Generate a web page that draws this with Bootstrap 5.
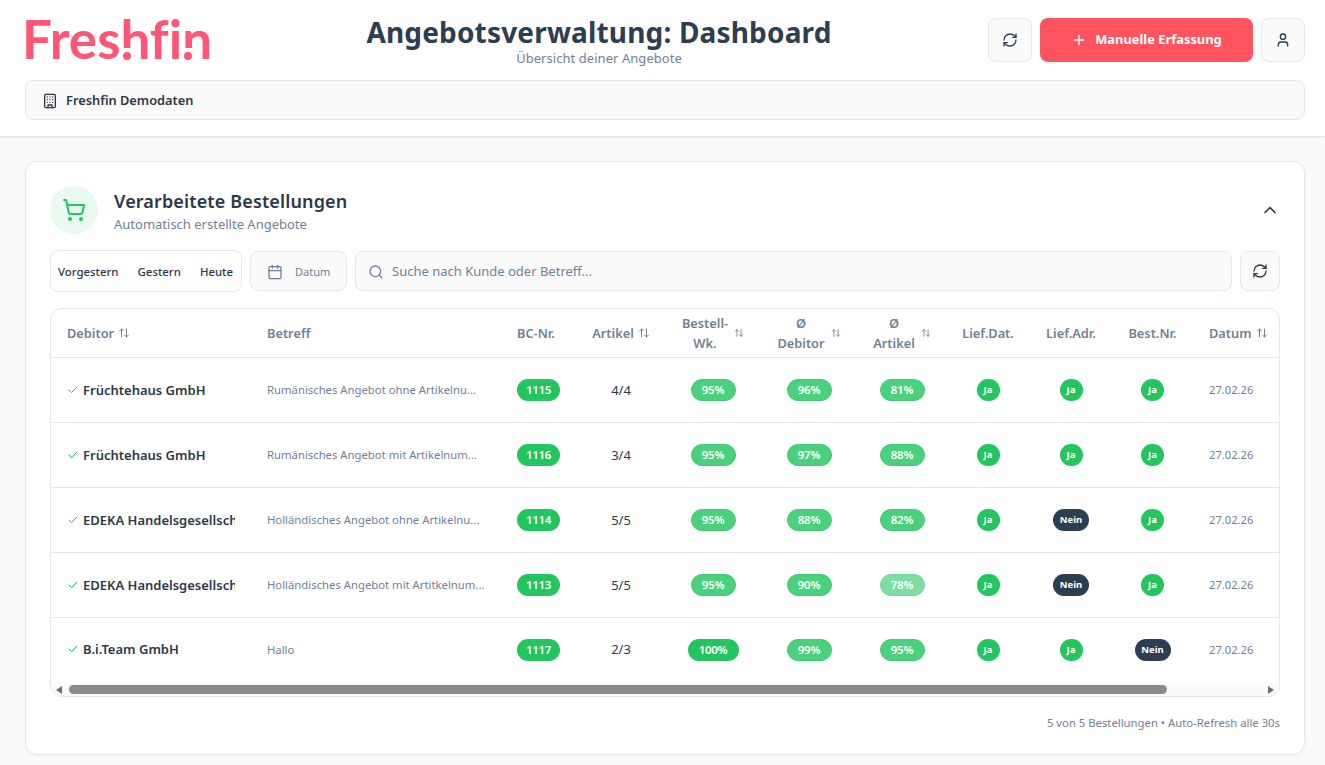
<!DOCTYPE html>
<html lang="de">
<head>
<meta charset="utf-8">
<title>Angebotsverwaltung</title>
<link href="https://cdn.jsdelivr.net/npm/bootstrap@5.3.0/dist/css/bootstrap.min.css" rel="stylesheet">
<style>
html,body{height:765px;overflow:hidden}
body{font-family:"Noto Sans","Open Sans",sans-serif;background:#fafafa;color:#2d3748}
.ico{fill:none;stroke:currentColor;stroke-width:2;stroke-linecap:round;stroke-linejoin:round;flex:none;display:block}
.topbar{background:#fff;border-bottom:1px solid #e2e8f0;box-shadow:0 1px 3px rgba(0,0,0,.05);height:137px;padding:18px 20px 0 25px}
.brand{position:relative;font-family:Lato,sans-serif;font-variant-ligatures:none;font-weight:700;font-size:53px;line-height:44px;color:#ff5577;width:188px;height:44px;margin-left:-3px;margin-top:-1px;white-space:nowrap}
.brand-cut{position:absolute;background:#fff;height:12px;top:31px}
.brand-dot{position:absolute;background:#ff5577;width:8px;height:8px;border-radius:50%;top:35px}
.cut-h{left:98px;width:13px}.dot-h{left:101px}
.cut-i{left:160px;width:11px}.dot-i{left:162px}
.head-mid{margin-top:-2px}
.page-title{font-size:28px;font-weight:700;line-height:32px;margin:0;color:#2c3e50;letter-spacing:.17px}
.page-sub{font-size:13px;line-height:18px;color:#718096;margin-top:1px;letter-spacing:.05px}
.sq-btn{width:44px;height:44px;padding:0;background:#fafafa;border:1px solid #e2e8f0;border-radius:8px;color:#2c3e50}
.sq-btn:hover{background:#fafafa}
.add-btn{width:213px;height:44px;padding:0;background:#ff5360;border:0;border-radius:8px;color:#fff;font-size:12.9px;font-weight:700}
.company{height:40px;margin-top:13px;background:#fafafa;border:1px solid #e2e8f0;border-radius:8px;padding:1px 0 0 16px;font-size:12.8px;font-weight:600;color:#2d3748}
.content{padding:24px 20px 0 25px}
.panel{height:594px;background:#fff;border:1px solid #e2e8f0;border-radius:12px;box-shadow:0 1px 3px rgba(0,0,0,.04);padding:24px}
.cart-disc{width:48px;height:48px;border-radius:50%;background:#e8f9ef;color:#22c55e}
.panel-title{font-size:18px;font-weight:600;line-height:26px;margin:2px 0 0;color:#2d3748;letter-spacing:.13px}
.panel-sub{font-size:13px;line-height:20px;color:#718096}
.toolbar{margin-top:16px;height:42px}
.segs{width:192px;height:42px;background:#fff;border:1px solid #e2e8f0;border-radius:8px;padding:2px 8px 0 7px;font-size:11.4px;font-weight:500;color:#2d3748}
.soft-box{height:40px;background:#fafafa;border:1px solid #e2e8f0;border-radius:8px;color:#718096;padding-top:2px}
.date-box{width:97px;padding-left:16px;font-size:11px}
.search-box{padding-left:12px;font-size:13px}
.re-btn{width:40px;height:40px;padding:0;background:#fafafa;border:1px solid #e2e8f0;border-radius:8px;color:#2d3748}
.grid-wrap{margin-top:16px;height:389px;border:1px solid #e2e8f0;border-radius:12px;overflow:hidden;position:relative}
.grid{width:1340px;table-layout:fixed;margin:0;--bs-table-bg:transparent}
.grid th,.grid td{border-bottom:1px solid #e2e8f0;padding:0 16px;vertical-align:middle}
.grid th{height:49px;padding-top:1px;font-size:12.8px;font-weight:600;color:#718096;line-height:20px}
.grid td{height:65px;font-size:13px;line-height:20px;color:#2d3748}
.grid thead tr th{height:48px}
.grid tr:last-child td{border-bottom:0;height:64px}
.w-a{width:200px}.w-b{width:250px}.w-c{width:75px}.w-d{width:90px}.w-e{width:94px}.w-f{width:98px}.w-g{width:88px}.w-h{width:84px}.w-i{width:82px}.w-j{width:81px}.w-k{width:198px}
.who{width:168px;overflow:hidden;white-space:nowrap;font-weight:600;line-height:20px;color:#2d3748}
.who .ico{color:#22c55e}
.subj{font-size:11.3px;color:#718096;white-space:nowrap}
.stamp{font-size:11.2px;color:#718096;white-space:nowrap}
.pill{display:inline-block;height:22px;line-height:20px;border-radius:11px;font-size:11.5px;font-weight:600;color:#fff;border:1px solid transparent;white-space:nowrap;letter-spacing:-.3px;text-align:center;vertical-align:middle}
.pill-solid{background:#22c55e;width:43px}
.pill-wide{background:#22c55e;width:51px}
.pill-hi{background:#4bd07d;border-color:#3ecb73;width:45px}
.pill-low{background:#7fdca4;border-color:#6fd699;width:45px}
.tag{display:inline-block;height:22px;line-height:22px;border-radius:11px;font-size:9.5px;font-weight:700;color:#fff;white-space:nowrap;vertical-align:middle}
.tag-yes{width:23px;background:#22c55e;text-align:center}
.tag-no{background:#2c3e50;width:36px;text-align:center}
.hd-gap{gap:6px}
.sb{position:absolute;left:0;right:0;bottom:0;height:13px;background:#fafafa}
.sb-thumb{position:absolute;left:18px;top:2px;width:1098px;height:9px;border-radius:5px;background:#8a8a8a}
.sb-l,.sb-r{position:absolute;top:3px;width:0;height:0;border-top:4px solid transparent;border-bottom:4px solid transparent}
.sb-l{left:5px;border-right:6px solid #6f6f6f}
.sb-r{right:5px;border-left:6px solid #6f6f6f}
.foot-note{margin-top:18px;font-size:11.3px;line-height:16px;color:#718096}
</style>
</head>
<body>
<svg width="0" height="0" class="position-absolute">
<defs>
<symbol id="i-refresh" viewBox="0 0 24 24"><path d="M3 12a9 9 0 0 1 9-9 9.75 9.75 0 0 1 6.74 2.74L21 8"/><path d="M21 3v5h-5"/><path d="M21 12a9 9 0 0 1-9 9 9.75 9.75 0 0 1-6.74-2.74L3 16"/><path d="M8 16H3v5"/></symbol>
<symbol id="i-plus" viewBox="0 0 24 24"><path d="M5 12h14"/><path d="M12 5v14"/></symbol>
<symbol id="i-user" viewBox="0 0 24 24"><path d="M19 21v-2a4 4 0 0 0-4-4H9a4 4 0 0 0-4 4v2"/><circle cx="12" cy="7" r="4"/></symbol>
<symbol id="i-building" viewBox="0 0 24 24"><rect width="16" height="20" x="4" y="2" rx="2" ry="2"/><path d="M9 22v-4h6v4"/><path d="M8 6h.01"/><path d="M16 6h.01"/><path d="M12 6h.01"/><path d="M12 10h.01"/><path d="M12 14h.01"/><path d="M16 10h.01"/><path d="M16 14h.01"/><path d="M8 10h.01"/><path d="M8 14h.01"/></symbol>
<symbol id="i-cart" viewBox="0 0 24 24"><circle cx="8" cy="21" r="1"/><circle cx="19" cy="21" r="1"/><path d="M2.05 2.05h2l2.66 12.42a2 2 0 0 0 2 1.58h9.78a2 2 0 0 0 1.95-1.57l1.65-7.43H5.12"/></symbol>
<symbol id="i-cal" viewBox="0 0 24 24"><path d="M8 2v4"/><path d="M16 2v4"/><rect width="18" height="18" x="3" y="4" rx="2"/><path d="M3 10h18"/></symbol>
<symbol id="i-search" viewBox="0 0 24 24"><circle cx="11" cy="11" r="8"/><path d="m21 21-4.3-4.3"/></symbol>
<symbol id="i-up" viewBox="0 0 24 24"><path d="m18 15-6-6-6 6"/></symbol>
<symbol id="i-check" viewBox="0 0 24 24"><path d="M20 6 9 17l-5-5"/></symbol>
<symbol id="i-sort" viewBox="0 0 24 24"><path d="m21 16-4 4-4-4"/><path d="M17 20V4"/><path d="m3 8 4-4 4 4"/><path d="M7 4v16"/></symbol>
</defs>
</svg>

<header class="topbar">
  <div class="d-flex justify-content-between align-items-start">
    <div class="brand">Freshfin<span class="brand-cut cut-h"></span><span class="brand-dot dot-h"></span><span class="brand-cut cut-i"></span><span class="brand-dot dot-i"></span></div>
    <div class="text-center head-mid">
      <h1 class="page-title">Angebotsverwaltung: Dashboard</h1>
      <div class="page-sub">Übersicht deiner Angebote</div>
    </div>
    <div class="d-flex gap-2">
      <button class="btn sq-btn d-flex align-items-center justify-content-center"><svg class="ico" width="16" height="16"><use href="#i-refresh"/></svg></button>
      <button class="btn add-btn d-flex align-items-center justify-content-center gap-2"><svg class="ico" width="16" height="16"><use href="#i-plus"/></svg>Manuelle Erfassung</button>
      <button class="btn sq-btn d-flex align-items-center justify-content-center"><svg class="ico" width="16" height="16"><use href="#i-user"/></svg></button>
    </div>
  </div>
  <div class="company d-flex align-items-center gap-2"><svg class="ico" width="16" height="16"><use href="#i-building"/></svg>Freshfin Demodaten</div>
</header>

<main class="content">
  <section class="panel">
    <div class="d-flex align-items-center justify-content-between">
      <div class="d-flex align-items-center gap-3">
        <div class="cart-disc d-flex align-items-center justify-content-center"><svg class="ico" width="24" height="24"><use href="#i-cart"/></svg></div>
        <div>
          <h2 class="panel-title">Verarbeitete Bestellungen</h2>
          <div class="panel-sub">Automatisch erstellte Angebote</div>
        </div>
      </div>
      <svg class="ico" width="20" height="20"><use href="#i-up"/></svg>
    </div>

    <div class="toolbar d-flex align-items-center gap-2">
      <div class="segs d-flex align-items-center justify-content-between"><span>Vorgestern</span><span>Gestern</span><span>Heute</span></div>
      <div class="soft-box date-box d-flex align-items-center gap-2"><svg class="ico" width="16" height="16"><use href="#i-cal"/></svg><span class="ms-1">Datum</span></div>
      <div class="soft-box search-box flex-grow-1 d-flex align-items-center gap-2"><svg class="ico" width="16" height="16"><use href="#i-search"/></svg>Suche nach Kunde oder Betreff...</div>
      <button class="btn re-btn d-flex align-items-center justify-content-center"><svg class="ico" width="16" height="16"><use href="#i-refresh"/></svg></button>
    </div>

    <div class="grid-wrap">
      <table class="table grid">
        <colgroup><col class="w-a"><col class="w-b"><col class="w-c"><col class="w-d"><col class="w-e"><col class="w-f"><col class="w-g"><col class="w-h"><col class="w-i"><col class="w-j"><col class="w-k"></colgroup>
        <thead>
          <tr>
            <th><span class="d-flex align-items-center gap-1">Debitor <svg class="ico" width="12" height="12"><use href="#i-sort"/></svg></span></th>
            <th>Betreff</th>
            <th>BC-Nr.</th>
            <th class="px-0"><span class="d-flex align-items-center justify-content-center gap-1">Artikel <svg class="ico" width="12" height="12"><use href="#i-sort"/></svg></span></th>
            <th class="px-0"><span class="d-flex align-items-center justify-content-center hd-gap"><span class="text-center">Bestell-<br>Wk.</span><svg class="ico" width="10" height="10"><use href="#i-sort"/></svg></span></th>
            <th class="px-0"><span class="d-flex align-items-center justify-content-center hd-gap"><span class="text-center">Ø<br>Debitor</span><svg class="ico" width="10" height="10"><use href="#i-sort"/></svg></span></th>
            <th class="px-0"><span class="d-flex align-items-center justify-content-center hd-gap"><span class="text-center">Ø<br>Artikel</span><svg class="ico" width="10" height="10"><use href="#i-sort"/></svg></span></th>
            <th class="px-0 text-center">Lief.Dat.</th>
            <th class="px-0 text-center">Lief.Adr.</th>
            <th class="px-0 text-center">Best.Nr.</th>
            <th><span class="d-flex align-items-center gap-1">Datum <svg class="ico" width="12" height="12"><use href="#i-sort"/></svg></span></th>
          </tr>
        </thead>
        <tbody>
          <tr>
            <td><div class="who d-flex align-items-center gap-1"><svg class="ico" width="12" height="12"><use href="#i-check"/></svg>Früchtehaus GmbH</div></td>
            <td><span class="subj">Rumänisches Angebot ohne Artikelnu...</span></td>
            <td><span class="pill pill-solid">1115</span></td>
            <td class="text-center">4/4</td>
            <td class="px-0 text-center"><span class="pill pill-hi">95%</span></td>
            <td class="px-0 text-center"><span class="pill pill-hi">96%</span></td>
            <td class="px-0 text-center"><span class="pill pill-hi">81%</span></td>
            <td class="px-0 text-center"><span class="tag tag-yes">Ja</span></td>
            <td class="px-0 text-center"><span class="tag tag-yes">Ja</span></td>
            <td class="px-0 text-center"><span class="tag tag-yes">Ja</span></td>
            <td><span class="stamp">27.02.26</span></td>
          </tr>
          <tr>
            <td><div class="who d-flex align-items-center gap-1"><svg class="ico" width="12" height="12"><use href="#i-check"/></svg>Früchtehaus GmbH</div></td>
            <td><span class="subj">Rumänisches Angebot mit Artikelnum...</span></td>
            <td><span class="pill pill-solid">1116</span></td>
            <td class="text-center">3/4</td>
            <td class="px-0 text-center"><span class="pill pill-hi">95%</span></td>
            <td class="px-0 text-center"><span class="pill pill-hi">97%</span></td>
            <td class="px-0 text-center"><span class="pill pill-hi">88%</span></td>
            <td class="px-0 text-center"><span class="tag tag-yes">Ja</span></td>
            <td class="px-0 text-center"><span class="tag tag-yes">Ja</span></td>
            <td class="px-0 text-center"><span class="tag tag-yes">Ja</span></td>
            <td><span class="stamp">27.02.26</span></td>
          </tr>
          <tr>
            <td><div class="who d-flex align-items-center gap-1"><svg class="ico" width="12" height="12"><use href="#i-check"/></svg>EDEKA Handelsgesellschaft</div></td>
            <td><span class="subj">Holländisches Angebot ohne Artikelnu...</span></td>
            <td><span class="pill pill-solid">1114</span></td>
            <td class="text-center">5/5</td>
            <td class="px-0 text-center"><span class="pill pill-hi">95%</span></td>
            <td class="px-0 text-center"><span class="pill pill-hi">88%</span></td>
            <td class="px-0 text-center"><span class="pill pill-hi">82%</span></td>
            <td class="px-0 text-center"><span class="tag tag-yes">Ja</span></td>
            <td class="px-0 text-center"><span class="tag tag-no">Nein</span></td>
            <td class="px-0 text-center"><span class="tag tag-yes">Ja</span></td>
            <td><span class="stamp">27.02.26</span></td>
          </tr>
          <tr>
            <td><div class="who d-flex align-items-center gap-1"><svg class="ico" width="12" height="12"><use href="#i-check"/></svg>EDEKA Handelsgesellschaft</div></td>
            <td><span class="subj">Holländisches Angebot mit Artitkelnum...</span></td>
            <td><span class="pill pill-solid">1113</span></td>
            <td class="text-center">5/5</td>
            <td class="px-0 text-center"><span class="pill pill-hi">95%</span></td>
            <td class="px-0 text-center"><span class="pill pill-hi">90%</span></td>
            <td class="px-0 text-center"><span class="pill pill-low">78%</span></td>
            <td class="px-0 text-center"><span class="tag tag-yes">Ja</span></td>
            <td class="px-0 text-center"><span class="tag tag-no">Nein</span></td>
            <td class="px-0 text-center"><span class="tag tag-yes">Ja</span></td>
            <td><span class="stamp">27.02.26</span></td>
          </tr>
          <tr>
            <td><div class="who d-flex align-items-center gap-1"><svg class="ico" width="12" height="12"><use href="#i-check"/></svg>B.i.Team GmbH</div></td>
            <td><span class="subj">Hallo</span></td>
            <td><span class="pill pill-solid">1117</span></td>
            <td class="text-center">2/3</td>
            <td class="px-0 text-center"><span class="pill pill-wide">100%</span></td>
            <td class="px-0 text-center"><span class="pill pill-hi">99%</span></td>
            <td class="px-0 text-center"><span class="pill pill-hi">95%</span></td>
            <td class="px-0 text-center"><span class="tag tag-yes">Ja</span></td>
            <td class="px-0 text-center"><span class="tag tag-yes">Ja</span></td>
            <td class="px-0 text-center"><span class="tag tag-no">Nein</span></td>
            <td><span class="stamp">27.02.26</span></td>
          </tr>
        </tbody>
      </table>
      <div class="sb"><span class="sb-l"></span><span class="sb-thumb"></span><span class="sb-r"></span></div>
    </div>
    <div class="foot-note text-end">5 von 5 Bestellungen • Auto-Refresh alle 30s</div>
  </section>
</main>
<script src="https://cdn.jsdelivr.net/npm/bootstrap@5.3.0/dist/js/bootstrap.bundle.min.js"></script>
</body>
</html>
